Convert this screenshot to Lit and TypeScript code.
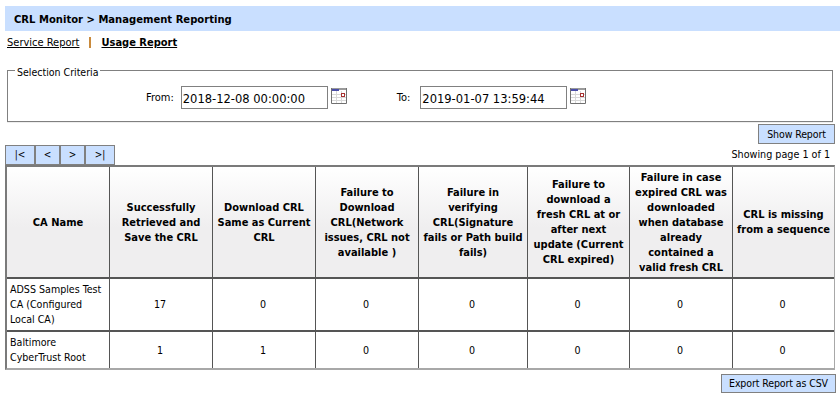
import { customElement } from 'lit/decorators.js';
import { css, html, LitElement } from 'lit';

const br = html`<br />`;

// line breaks as in the original column widths
const HEADERS = [
  ['CA Name'],
  ['Successfully', 'Retrieved and', 'Save the CRL'],
  ['Download CRL', 'Same as Current', 'CRL'],
  ['Failure to', 'Download', 'CRL(Network', 'issues, CRL not', 'available )'],
  ['Failure in', 'verifying', 'CRL(Signature', 'fails or Path build', 'fails)'],
  ['Failure to', 'download a', 'fresh CRL at or', 'after next', 'update (Current', 'CRL expired)'],
  ['Failure in case', 'expired CRL was', 'downloaded', 'when database', 'already', 'contained a', 'valid fresh CRL'],
  ['CRL is missing', 'from a sequence'],
];

const ROWS = [
  ['ADSS Samples Test CA (Configured Local CA)', '17', '0', '0', '0', '0', '0', '0'],
  ['Baltimore CyberTrust Root', '1', '1', '0', '0', '0', '0', '0'],
];

const WIDTHS = [103, 103, 103, 103, 109, 102, 103, 101];

const calendar = html`
  <svg class="cal" width="16" height="16" viewBox="0 0 16 16">
    <rect x="0" y="0" width="16" height="16" fill="#fff" />
    <rect x="0" y="0" width="16" height="2" fill="#9a9a9a" />
    <rect x="1" y="1" width="7" height="2" fill="#4a4ea8" />
    <path d="M5.5 3v12M10.5 3v12M1 6.5h14M1 9.5h14M1 12.5h14" stroke="#d8d8d8" stroke-width="1" fill="none" />
    <rect x="10.5" y="5.5" width="3" height="3" fill="#fff" stroke="#a83232" />
    <path d="M.5 0v15.5h15V0" stroke="#707070" fill="none" />
  </svg>
`;

@customElement('app-root')
export class AppRoot extends LitElement {
  static styles = css`
    :host {
      display: block;
      width: 840px;
      height: 414px;
      overflow: hidden;
      background: #fff;
      color: #000;
      font-family: 'DejaVu Sans', sans-serif;
      font-stretch: condensed;
      font-size: 11px;
      line-height: 15px;
      box-sizing: border-box;
      padding-top: 6px;
    }

    .title {
      margin-left: 5px;
      height: 25px;
      box-sizing: border-box;
      padding: 1px 0 0 9px;
      background: #c9dfff;
      font-size: 11.15px;
      font-weight: 700;
      display: flex;
      align-items: center;
    }

    .tabs {
      display: flex;
      align-items: center;
      height: 15px;
      margin: 4px 0 0 7px;
    }

    .tabs a {
      color: #000;
      text-decoration: underline;
    }

    .tabs .current {
      font-weight: 700;
    }

    .sep {
      width: 2px;
      height: 11px;
      margin: 0 10px;
      background: #c98a3c;
    }

    fieldset {
      margin: 11px 7px 0 7px;
      padding: 0;
      height: 61px;
      box-sizing: border-box;
      border: 1px solid #808080;
      box-shadow: 0 1px 0 #eee;
    }

    legend {
      margin-left: 7px;
      padding: 4px 2px 0;
      font-size: 10.5px;
      line-height: 15px;
    }

    .criteria {
      display: flex;
      align-items: flex-start;
      padding: 0 0 0 138px;
      margin-top: 6px;
    }

    .criteria label {
      margin-right: 7px;
      line-height: 23px;
    }

    .criteria label.to {
      margin-left: 50px;
      margin-right: 10px;
    }

    .field {
      width: 147px;
      height: 23px;
      box-sizing: border-box;
      border: 1px solid #808080;
      padding: 1px 1px 0;
      font-family: inherit;
      font-stretch: condensed;
      font-size: 12.8px;
      color: #000;
      background: #fff;
    }

    .cal {
      display: block;
      margin: 2px 0 0 3px;
    }

    .actions {
      display: flex;
      justify-content: flex-end;
      padding: 2px 5px 0 0;
    }

    button {
      font: inherit;
      font-size: 10.5px;
      letter-spacing: -0.1px;
      color: #000;
      background: #c9dfff;
      border: 1px solid #808080;
      padding: 0;
      box-sizing: border-box;
    }

    .show {
      width: 77px;
      height: 20px;
    }

    .export {
      width: 115px;
      height: 19px;
    }

    .pager-row {
      display: flex;
      align-items: center;
      justify-content: space-between;
      height: 21px;
      margin-left: 5px;
      padding-right: 10px;
      font-size: 10.7px;
    }

    .pager {
      display: flex;
      height: 20px;
    }

    .pager button {
      height: 20px;
      width: 25px;
      font-size: 10px;
      letter-spacing: 0;
    }

    .pager button:first-child,
    .pager button:last-child {
      width: 30px;
    }

    table {
      margin-left: 5px;
      width: 830px;
      table-layout: fixed;
      border-collapse: separate;
      border-spacing: 0;
      border-top: 2px solid #7a7a7a;
      border-left: 2px solid #7a7a7a;
      border-right: 1px solid #a8a8a8;
      border-bottom: 2px solid #a8a8a8;
      box-sizing: border-box;
    }

    th,
    td {
      padding: 0 2px;
      text-align: center;
      border-right: 1px solid #555;
      box-sizing: border-box;
    }

    th:last-child,
    td:last-child {
      border-right: 0;
    }

    th {
      height: 112px;
      background: linear-gradient(#ffffff, #efeeef 55%);
      border-bottom: 2px solid #555;
      font-weight: 700;
    }

    td {
      font-size: 10.6px;
      padding: 0 3px 0 1px;
    }

    tr.first td {
      height: 53px;
      border-bottom: 2px solid #555;
    }

    tr.second td {
      height: 36px;
    }

    td.name {
      text-align: left;
      padding-left: 3px;
    }

    .footer {
      display: flex;
      justify-content: flex-end;
      padding: 4px 4px 0 0;
    }
  `;

  render() {
    return html`
      <div class="title">CRL Monitor &gt; Management Reporting</div>
      <nav class="tabs">
        <a href="#">Service Report</a>
        <span class="sep"></span>
        <a class="current" href="#">Usage Report</a>
      </nav>
      <fieldset>
        <legend>Selection Criteria</legend>
        <div class="criteria">
          <label>From:</label>
          <input class="field" .value=${'2018-12-08 00:00:00'} />
          ${calendar}
          <label class="to">To:</label>
          <input class="field" .value=${'2019-01-07 13:59:44'} />
          ${calendar}
        </div>
      </fieldset>
      <div class="actions"><button class="show">Show Report</button></div>
      <div class="pager-row">
        <div class="pager">
          <button>|&lt;</button><button>&lt;</button><button>&gt;</button><button>&gt;|</button>
        </div>
        <span>Showing page 1 of 1</span>
      </div>
      <table>
        <colgroup>
          ${WIDTHS.map((w) => html`<col style="width:${w}px" />`)}
        </colgroup>
        <thead>
          <tr>
            ${HEADERS.map((lines) => html`<th>${lines.map((l, i) => html`${i ? br : ''}${l}`)}</th>`)}
          </tr>
        </thead>
        <tbody>
          ${ROWS.map(
            (row, i) => html`
              <tr class=${i === 0 ? 'first' : 'second'}>
                ${row.map((c, j) => html`<td class=${j === 0 ? 'name' : ''}>${c}</td>`)}
              </tr>
            `
          )}
        </tbody>
      </table>
      <div class="footer"><button class="export">Export Report as CSV</button></div>
    `;
  }
}
